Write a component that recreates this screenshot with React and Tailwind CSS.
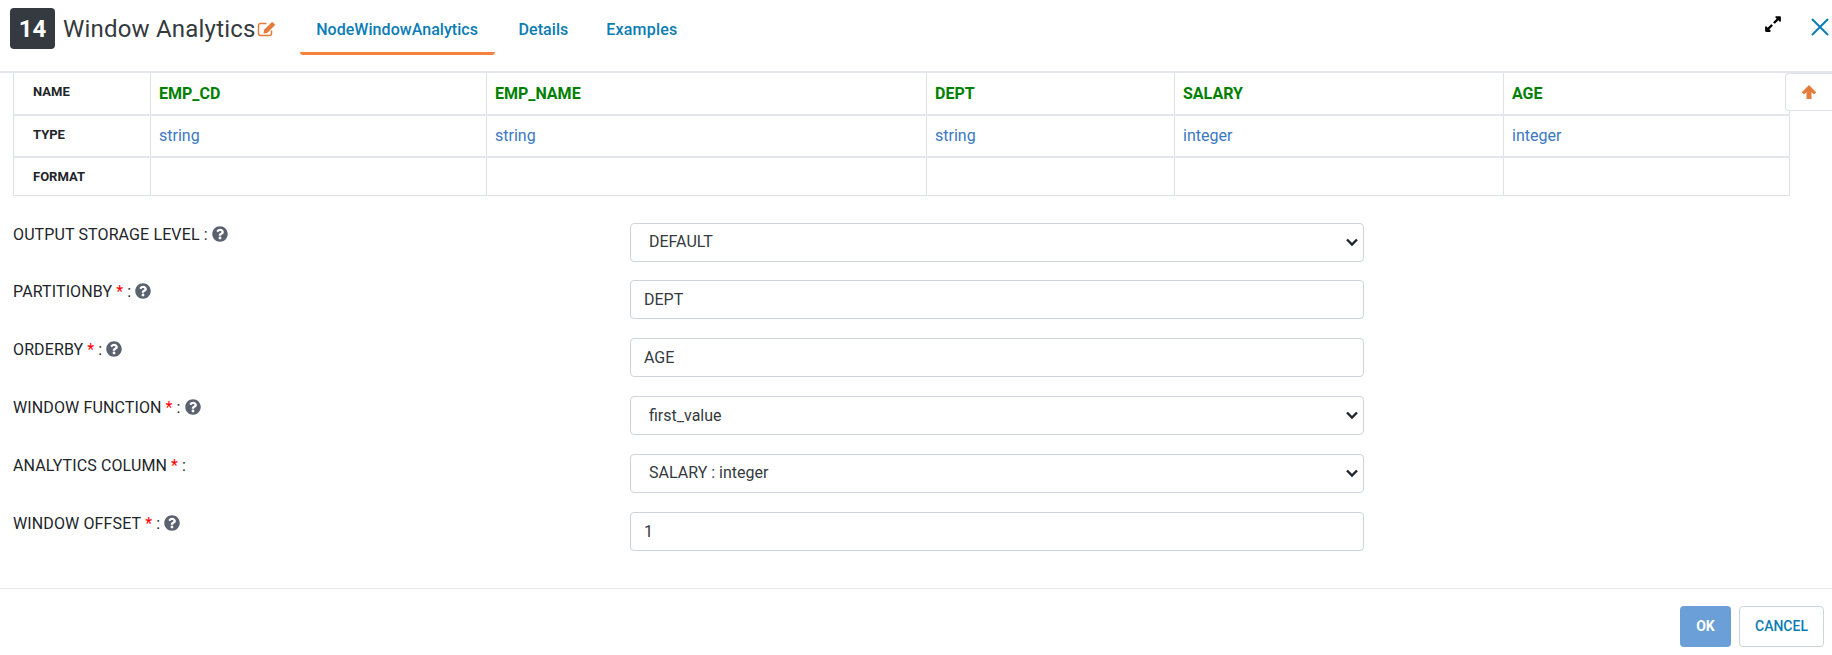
import React from 'react';
import { FaExpandAlt, FaQuestionCircle } from 'react-icons/fa';

const columns = [
  { name: 'EMP_CD', type: 'string', width: 'w-[336px]' },
  { name: 'EMP_NAME', type: 'string', width: 'w-[440px]' },
  { name: 'DEPT', type: 'string', width: 'w-[248px]' },
  { name: 'SALARY', type: 'integer', width: 'w-[329px]' },
  { name: 'AGE', type: 'integer', width: 'w-[286px]' },
];

const fields = [
  { label: 'OUTPUT STORAGE LEVEL', help: true, kind: 'select', value: 'DEFAULT' },
  { label: 'PARTITIONBY', required: true, help: true, kind: 'input', value: 'DEPT' },
  { label: 'ORDERBY', required: true, help: true, kind: 'input', value: 'AGE' },
  { label: 'WINDOW FUNCTION', required: true, help: true, kind: 'select', value: 'first_value' },
  { label: 'ANALYTICS COLUMN', required: true, kind: 'select', value: 'SALARY : integer' },
  { label: 'WINDOW OFFSET', required: true, help: true, kind: 'input', value: '1' },
];

const FieldRow = ({ field }) => (
  <div className="flex h-[40px] mb-[17.8px]">
    <div className="w-[617px] pt-[1px] text-[16px] leading-[21px] tracking-[0.12px] text-[#212529] flex items-start">
      <span>{field.label}</span>
      {field.required && <span className="text-[#ff0000] ml-[4px]">*</span>}
      <span className="ml-[4px]">:</span>
      {field.help && <FaQuestionCircle className="ml-[4px] mt-[2px] text-[16px] text-[#5a6270]" />}
    </div>
    {field.kind === 'select' ? (
      <div className="relative w-[734px] h-[39px]">
        <select
          defaultValue={field.value}
          className="w-full h-full appearance-none bg-white border border-[#ced4da] rounded-[4px] pl-[18px] text-[16px] text-[#343a40]"
        >
          <option>{field.value}</option>
        </select>
        <svg className="absolute right-[4px] top-[13px] w-[16px] h-[12px] pointer-events-none" viewBox="0 0 16 12" fill="none">
          <path d="M3 3.5l5 5 5-5" stroke="#212529" strokeWidth="2.4" />
        </svg>
      </div>
    ) : (
      <input
        type="text"
        readOnly
        value={field.value}
        className="w-[734px] h-[39px] bg-white border border-[#ced4da] rounded-[4px] px-[13px] text-[16px] text-[#343a40]"
      />
    )}
  </div>
);

const App = () => {
  return (
    <div className="relative w-[1832px] h-[655px] bg-white overflow-hidden font-['Roboto',sans-serif]">
      <header className="flex items-start h-[73px] border-b-2 border-[#e3e6ea]">
        <div className="mt-[8px] ml-[10px] w-[45px] h-[41px] rounded-[4px] bg-[#343a40] text-white text-[24px] font-bold flex items-center justify-center">
          14
        </div>
        <h1 className="mt-[13px] ml-[8px] text-[24px] leading-[32px] tracking-[0.2px] text-[#343a40]">Window Analytics</h1>
        <svg className="mt-[21px] ml-[1px] w-[19px] h-[16px]" viewBox="0 0 19 16" fill="none">
          <path d="M9.5 2.5H3.5A2 2 0 0 0 1.5 4.500v8a2 2 0 0 0 2 2h9a2 2 0 0 0 2-2V9.500" stroke="#e47b3b" strokeWidth="1.5" />
          <path d="M6.500 12.500l.6-3.700 7.400-7.400a1 1 0 0 1 1.400 0l1.700 1.700a1 1 0 0 1 0 1.400l-7.400 7.400z" fill="#e47b3b" />
        </svg>
        <nav className="flex ml-[24px] text-[16px] font-medium tracking-[0.05px] text-[#0b7cb5]">
          <div className="w-[195px] h-[55px] pt-[19px] text-center border-b-[3px] border-[#f5813f] rounded-b-[3px] leading-[21px]">NodeWindowAnalytics</div>
          <div className="ml-[24px] pt-[19px] leading-[21px]">Details</div>
          <div className="ml-[38px] pt-[19px] leading-[21px] tracking-[0.2px]">Examples</div>
        </nav>
        <div className="ml-auto flex">
          <FaExpandAlt className="mt-[15px] text-[18px] text-black" />
          <svg className="ml-[29px] mr-[3px] mt-[18px] w-[18px] h-[18px]" viewBox="0 0 18 18" fill="none">
            <path d="M1 1l16 16M17 1L1 17" stroke="#0b7cb5" strokeWidth="2" />
          </svg>
        </div>
      </header>

      <div className="pl-[13px]">
        <table className="table-fixed border-collapse w-[1776px]">
          <tbody>
            <tr className="h-[42px] border-b-2 border-[#e3e6ea]">
              <th className="w-[137px] border-x border-[#dee2e6] pl-[19px] pb-[3px] text-left text-[13px] font-bold text-[#212529]">NAME</th>
              {columns.map((col) => (
                <td key={col.name} className={`${col.width} border-x border-[#dee2e6] pl-[8px] pt-[1px] text-[16px] font-bold text-[#008000]`}>{col.name}</td>
              ))}
            </tr>
            <tr className="h-[42px] border-b-2 border-[#e3e6ea]">
              <th className="border-x border-[#dee2e6] pl-[19px] pb-[3px] text-left text-[13px] font-bold text-[#212529]">TYPE</th>
              {columns.map((col) => (
                <td key={col.name} className="border-x border-[#dee2e6] pl-[8px] text-[16px] text-[#3a78c2]">{col.type}</td>
              ))}
            </tr>
            <tr className="h-[38px] border-b border-[#dee2e6]">
              <th className="border-x border-[#dee2e6] pl-[19px] text-left text-[13px] font-bold text-[#212529]">FORMAT</th>
              {columns.map((col) => (
                <td key={col.name} className="border-x border-[#dee2e6]"></td>
              ))}
            </tr>
          </tbody>
        </table>
      </div>

      <div className="absolute right-0 top-[73px] w-[47px] h-[38px] bg-white border border-[#dee2e6] border-r-0 rounded-l-[4px] flex items-center justify-center">
        <svg className="w-[16px] h-[14px]" viewBox="0 0 16 14">
          <path d="M8 0L.8 7.200 3 9.400 5.500 6.900V14H10.500V6.900L13 9.400 15.200 7.200Z" fill="#e47b3b" />
        </svg>
      </div>

      <form className="mt-[27.2px] pl-[13px]">
        {fields.map((field) => (
          <FieldRow key={field.label} field={field} />
        ))}
      </form>

      <footer className="mt-[36.400px] border-t border-[#e5e7eb] pt-[17px] pr-[8px] flex justify-end gap-[8px]">
        <button className="w-[51px] h-[41px] rounded-[4px] bg-[#6a9fd8] text-white text-[14px] font-bold">OK</button>
        <button className="w-[85px] h-[41px] rounded-[4px] bg-white border border-[#ced4da] text-[#0b7cb5] text-[14px] font-medium">CANCEL</button>
      </footer>
    </div>
  );
};

export default App;
